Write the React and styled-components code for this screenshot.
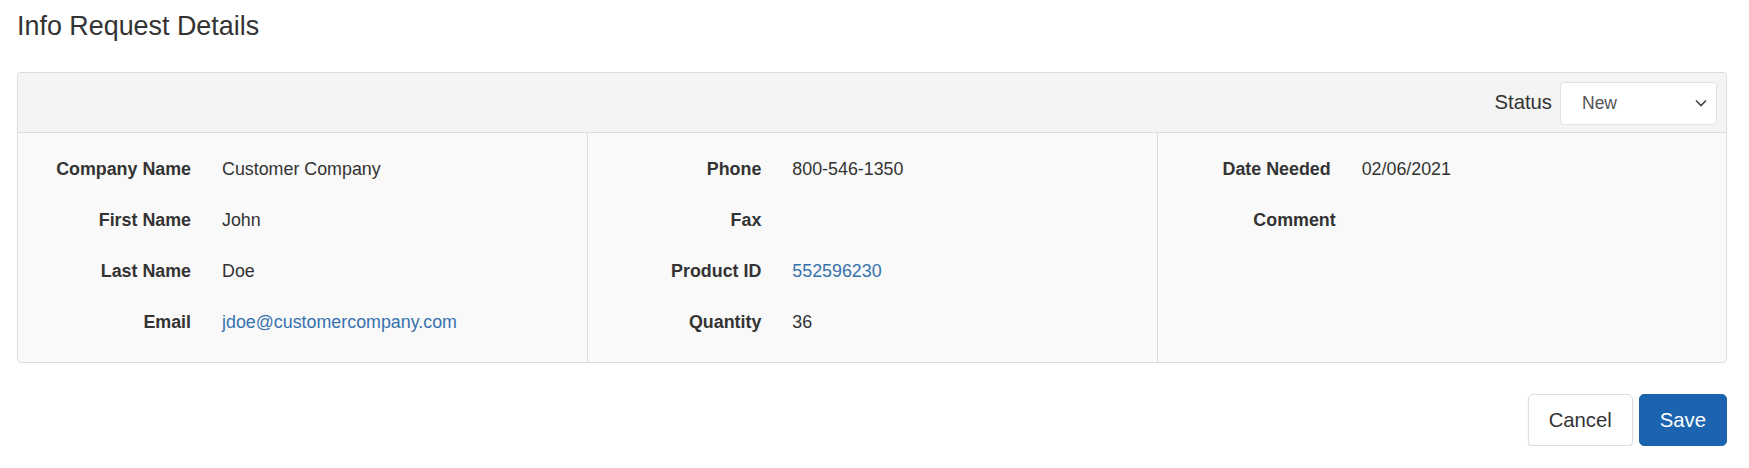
import React from "react";
import styled, { createGlobalStyle } from "styled-components";

const Global = createGlobalStyle`
  html, body { margin: 0; padding: 0; background: #fff; }
  body {
    font-family: "Liberation Sans", Arial, sans-serif;
    color: #333;
    font-size: 17.85px;
    line-height: 25px;
  }
  * { box-sizing: border-box; }
`;

const Page = styled.div`
  padding: 12px 22px 0 17px;
`;

const Title = styled.h3`
  margin: 0;
  font-size: 26.9px;
  font-weight: 400;
  line-height: 29.7px;
  color: #333;
`;

const Panel = styled.section`
  margin-top: 30px;
  border: 1px solid #dcdcdc;
  border-radius: 4px;
  background: #f9f9f9;
  overflow: hidden;
`;

const PanelHeader = styled.header`
  display: flex;
  justify-content: flex-end;
  align-items: center;
  gap: 8px;
  padding: 9px 9px 7px;
  background: #f4f4f4;
  border-bottom: 1px solid #dcdcdc;
`;

const HeaderLabel = styled.span`
  font-size: 20.3px;
  color: #333;
  padding-bottom: 2px;
`;

const SelectBox = styled.div`
  width: 157px;
  height: 43px;
  display: flex;
  align-items: center;
  justify-content: space-between;
  padding: 0 9px 0 21px;
  background: #fff;
  border: 1px solid #e2e2e2;
  border-radius: 4px;
  color: #555;
  font-size: 17.5px;
`;

const Body = styled.div`
  display: grid;
  grid-template-columns: repeat(3, 1fr);
`;

const Column = styled.div`
  display: flex;
  flex-direction: column;
  gap: 26px;
  padding: 24px 0 27px;
  border-left: ${(p) => (p.$first ? "none" : "1px solid #dcdcdc")};
`;

const Row = styled.div`
  display: flex;
  align-items: baseline;
  gap: 31px;
  min-height: 25px;
`;

const Label = styled.span`
  flex: 0 0 ${(p) => (p.$wide ? 178 : 173)}px;
  text-align: right;
  font-weight: 700;
  color: #333;
`;

const Value = styled.span`
  color: ${(p) => (p.$link ? "#3672ae" : "#333")};
`;

const Actions = styled.div`
  display: flex;
  justify-content: flex-end;
  gap: 6px;
  margin-top: 31px;
`;

const Button = styled.button`
  font-family: inherit;
  font-size: 20.3px;
  line-height: 28px;
  padding: 11px 20px;
  border-radius: 5px;
  cursor: pointer;
  border: 1px solid ${(p) => (p.$primary ? "#1c63ad" : "#dedede")};
  background: ${(p) => (p.$primary ? "#1c64b0" : "#fff")};
  color: ${(p) => (p.$primary ? "#fff" : "#333")};
  box-shadow: ${(p) => (p.$primary ? "none" : "0 2px 2px rgba(0,0,0,0.09)")};
`;

const Chevron = () => (
  <svg width="12" height="8" viewBox="0 0 12 8" fill="none">
    <path d="M1 1.5 L6 6.5 L11 1.5" stroke="#444" strokeWidth="1.6" />
  </svg>
);

const columns = [
  [
    { label: "Company Name", value: "Customer Company" },
    { label: "First Name", value: "John" },
    { label: "Last Name", value: "Doe" },
    { label: "Email", value: "jdoe@customercompany.com", link: true },
  ],
  [
    { label: "Phone", value: "800-546-1350" },
    { label: "Fax", value: "" },
    { label: "Product ID", value: "552596230", link: true },
    { label: "Quantity", value: "36" },
  ],
  [
    { label: "Date Needed", value: "02/06/2021" },
    { label: "Comment", value: "", wide: true },
  ],
];

export default function App() {
  return (
    <Page>
      <Global />
      <Title>Info Request Details</Title>
      <Panel>
        <PanelHeader>
          <HeaderLabel>Status</HeaderLabel>
          <SelectBox role="listbox">
            <span>New</span>
            <Chevron />
          </SelectBox>
        </PanelHeader>
        <Body>
          {columns.map((col, i) => (
            <Column key={i} $first={i === 0}>
              {col.map((f) => (
                <Row key={f.label}>
                  <Label $wide={f.wide}>{f.label}</Label>
                  <Value $link={f.link}>{f.value}</Value>
                </Row>
              ))}
            </Column>
          ))}
        </Body>
      </Panel>
      <Actions>
        <Button>Cancel</Button>
        <Button $primary>Save</Button>
      </Actions>
    </Page>
  );
}
